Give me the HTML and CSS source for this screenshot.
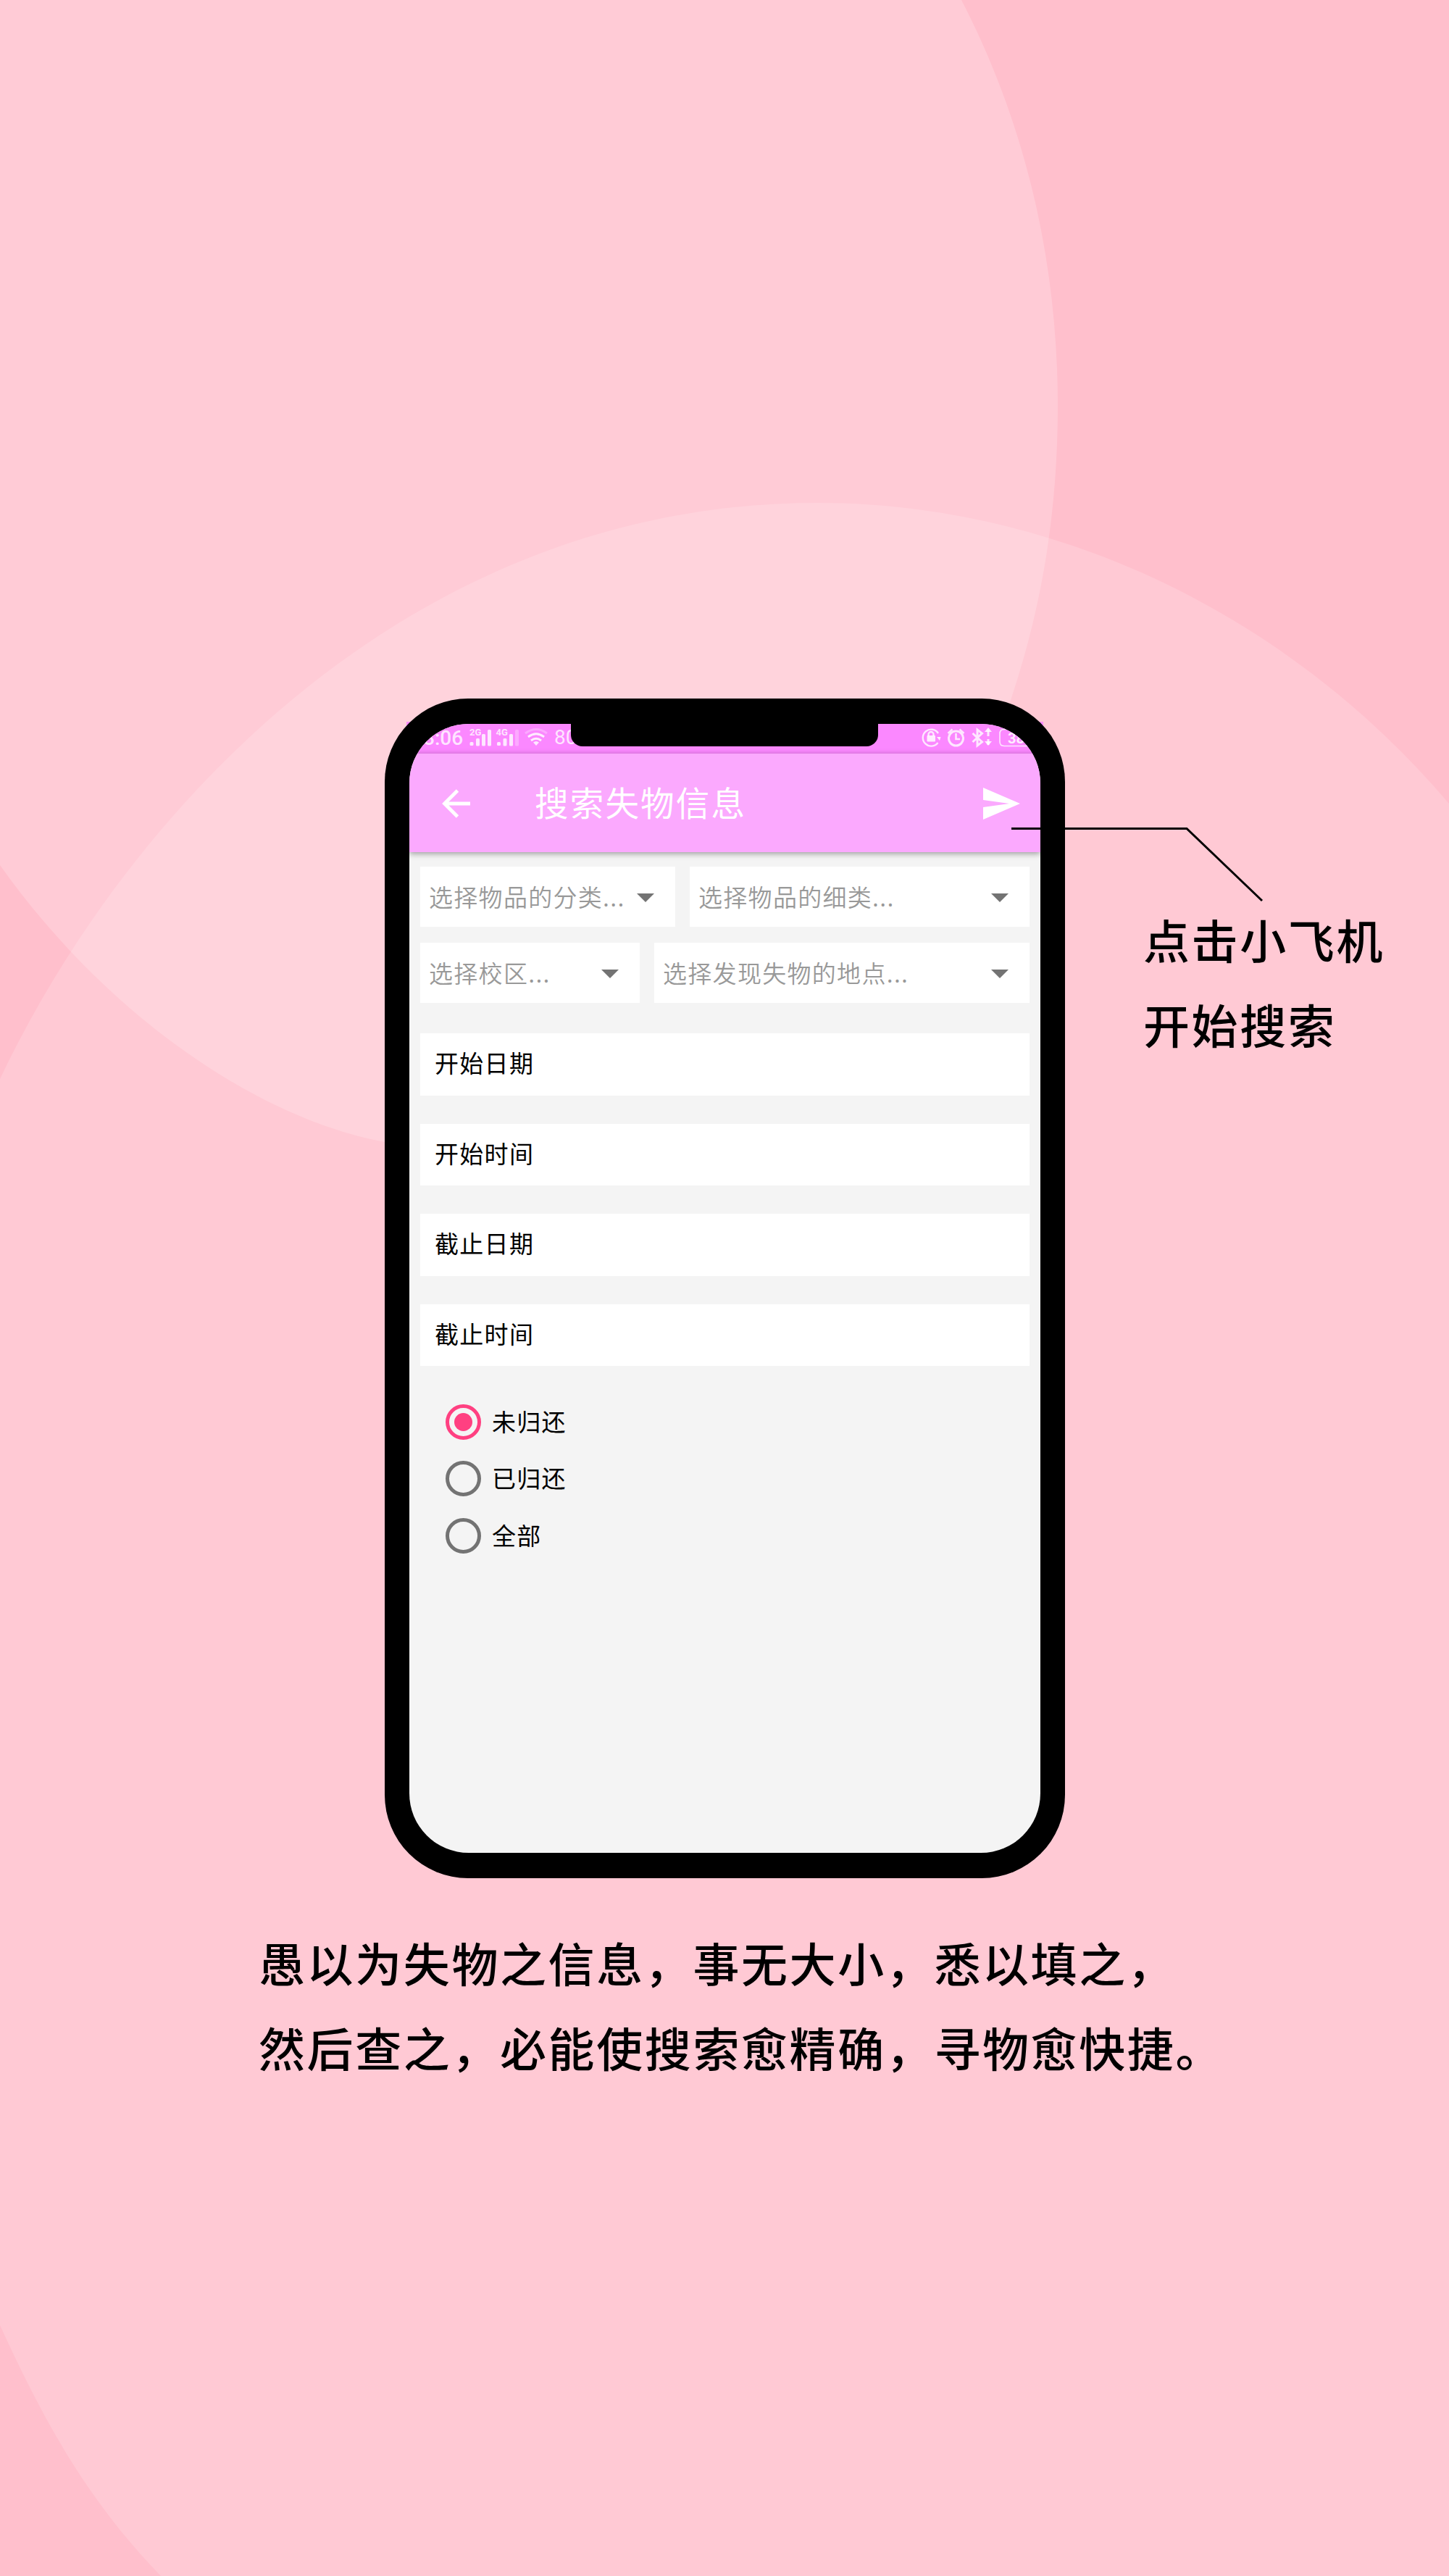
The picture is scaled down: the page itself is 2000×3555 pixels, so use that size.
FILE: index.html
```html
<!DOCTYPE html>
<html lang="zh-CN">
<head>
<meta charset="utf-8">
<title>搜索失物信息</title>
<link rel="stylesheet" href="styles.css">
</head>
<body>
<main class="poster">
  <svg class="backdrop" viewBox="0 0 2000 3555" aria-hidden="true">
    <path fill="#fff" fill-opacity=".2" d="M0 0H1327C1415 170 1460 360 1460 560C1460 700 1440 830 1397 960C1260 1400 870 1660 531 1576C360 1545 150 1405 0 1194Z"/>
    <path fill="#fff" fill-opacity=".16" d="M0 1489C165 1140 550 694 1129 694C1460 694 1780 850 2000 1109V3555H222C120 3450 60 3340 0 3209Z"/>
  </svg>

  <section class="stage">
    <div class="phone">
      <div class="screen">
        <div class="status">
          <span class="clock">8:06</span>
          <svg class="status-left" viewBox="646 999 112 41" width="112" height="41">
            <g fill="#fff" fill-opacity=".8">
              <text x="648" y="1015" class="net">2G</text>
              <text x="684.500" y="1015" class="net">4G</text>
              <rect x="648.500" y="1024" width="5" height="5" rx="1.500"/><rect x="657" y="1019" width="5" height="10.500" rx="1.500"/><rect x="665" y="1013" width="5" height="16.500" rx="1.500"/><rect x="673" y="1007" width="5" height="22.500" rx="1.500"/>
              <rect x="686" y="1024" width="5" height="5" rx="1.500"/><rect x="694.500" y="1019" width="5" height="10.500" rx="1.500"/><rect x="703" y="1013" width="5" height="16.500" rx="1.500"/><rect x="711" y="1007" width="5" height="22.500" rx="1.500" fill-opacity=".28"/>
              <path d="M740 1029l-4-4.500q4-3 8 0z"/>
            </g>
            <g fill="none" stroke="#fff" stroke-opacity=".85" stroke-width="3">
              <path d="M733 1022q7-5.500 14 0"/><path d="M729 1017q11-8.500 22 0"/><path d="M725 1012q15-11 30 0" stroke-opacity=".28"/>
            </g>
          </svg>
          <span class="speed">80</span>
          <svg class="status-right" viewBox="1270 999 166 41" width="166" height="41">
            <g fill="none" stroke="#fff" stroke-opacity=".8" stroke-width="2.400">
              <path d="M1295 1012a11.500 11.500 0 1 0-.5 13"/><path d="M1281.500 1016v-2.500a3.500 3.500 0 0 1 7 0v2.500"/>
              <circle cx="1319.500" cy="1019" r="10" stroke-width="3"/><path d="M1319.500 1012v8h5.500" stroke-width="2.600"/><path d="M1308.500 1012l6-5.500M1330.500 1012l-6-5.500"/>
              <path d="M1342.500 1012l13 12-6.500 5v-22l6.500 5-13 12" stroke-width="3"/><path d="M1364 1008v8M1364 1020v8" stroke-width="3"/>
              <path d="M1450 1006.500h-64q-6 0-6 6v11q0 6 6 6h64" stroke-width="1.600"/>
            </g>
            <g fill="#fff" fill-opacity=".85">
              <rect x="1279.500" y="1015" width="11.500" height="8.500" rx="1"/><path d="M1293 1017h5.500l-1.500 5z"/>
              <path d="M1364 1004l5 6h-10zM1364 1029l5-6h-10z"/>
              <text x="1391" y="1025.500" class="battery">38</text>
            </g>
          </svg>
        </div>

        <header class="appbar">
          <svg class="back" viewBox="0 0 40 40" width="40" height="40"><path d="M39 20H4M21.500 2L3.500 20l18 18" fill="none" stroke="#fff" stroke-width="4.800"/></svg>
          <h1 class="title">搜索失物信息</h1>
          <svg class="send" viewBox="0 0 51 44" width="51" height="44"><path d="M0 0L51 22 0 44V27L36 22 0 17Z" fill="#fff"/></svg>
        </header>

        <div class="form">
          <div class="selects first">
            <div class="select"><span>选择物品的分类...</span><i class="caret"></i></div>
            <div class="select"><span>选择物品的细类...</span><i class="caret"></i></div>
          </div>
          <div class="selects second">
            <div class="select"><span>选择校区...</span><i class="caret"></i></div>
            <div class="select"><span>选择发现失物的地点...</span><i class="caret"></i></div>
          </div>
          <div class="fields">
            <div class="field">开始日期</div>
            <div class="field">开始时间</div>
            <div class="field">截止日期</div>
            <div class="field">截止时间</div>
          </div>
          <div class="radios">
            <div class="radio on"><i class="ring"></i><span>未归还</span></div>
            <div class="radio"><i class="ring"></i><span>已归还</span></div>
            <div class="radio"><i class="ring"></i><span>全部</span></div>
          </div>
        </div>
      </div>
      <div class="notch"></div>
    </div>
    <p class="note">点击小飞机<br>开始搜索</p>
  </section>

  <p class="caption">愚以为失物之信息，事无大小，悉以填之，<br>然后查之，必能使搜索愈精确，寻物愈快捷。</p>

  <svg class="leader" viewBox="0 0 350 106" width="350" height="106" aria-hidden="true"><path d="M0 3.500H242L346 103" fill="none" stroke="#000" stroke-width="3"/></svg>
</main>
</body>
</html>
```
FILE: styles.css
```css
* { box-sizing: border-box; }

body {
  margin: 0;
  font-family: "Noto Sans CJK SC", sans-serif;
  color: #000;
}

h1, p { margin: 0; font-weight: 400; }
svg { display: block; }

.poster {
  position: relative;
  isolation: isolate;
  width: 2000px;
  height: 3555px;
  padding-top: 964px;
  overflow: hidden;
  background: #ffbfcc;
}

.backdrop {
  position: absolute;
  inset: 0;
  z-index: -2;
  width: 2000px;
  height: 3555px;
}

.stage { display: flex; padding-left: 531px; }

.phone {
  position: relative;
  width: 939px;
  height: 1628px;
  padding: 35px 34px 35px;
  border-radius: 115px;
  background: #000;
}

/* The screen's square corners show slightly past the rounded frame. */
.phone::before {
  content: "";
  position: absolute;
  z-index: -1;
  left: 30px;
  right: 30px;
  top: 32px;
  height: 80px;
  background: #f98dfc;
}

.screen {
  height: 100%;
  border-radius: 82px;
  overflow: hidden;
  background: #f4f4f4;
}

.notch {
  position: absolute;
  left: 257px;
  top: 30px;
  width: 424px;
  height: 36px;
  border-radius: 0 0 16px 16px;
  background: #000;
}

.status {
  display: flex;
  height: 41px;
  padding-left: 19px;
  background: #fb88ff;
  color: rgba(255, 255, 255, .8);
  font: 500 28px/40px Roboto, sans-serif;
}
.clock { width: 62px; }
.speed { width: 505px; margin-left: 7px; font-weight: 400; line-height: 38px; }
.net { font: 700 13px Roboto, sans-serif; }
.battery { font: 700 20px Roboto, sans-serif; }

.appbar {
  position: relative;
  display: flex;
  align-items: center;
  height: 136px;
  padding: 1px 28px 0 45px;
  background: #fba9fe;
  box-shadow: 0 2px 8px rgba(0, 0, 0, .38);
}
.title {
  flex: 1;
  margin: -6px 0 0 88px;
  font-size: 46.500px;
  line-height: 60px;
  letter-spacing: 2.200px;
  color: #fff;
}

.form {
  padding: 20px 15px 0;
  font-size: 33px;
  line-height: 48px;
  letter-spacing: 1.300px;
}

.selects { display: grid; gap: 20px; }
.first { grid-template-columns: 352px 1fr; margin-bottom: 22px; }
.second { grid-template-columns: 303px 1fr; margin-bottom: 42px; }
.select {
  display: flex;
  align-items: center;
  justify-content: space-between;
  height: 83px;
  padding: 0 29px 2px 12px;
  background: #fff;
  color: #999;
  white-space: nowrap;
  font-weight: 350;
}
.caret {
  margin-top: 4px;
  border: 12px solid transparent;
  border-top-color: #737373;
  border-bottom: 0;
}

.fields { display: grid; gap: 39px; }
.field {
  height: 85.500px;
  padding-left: 20px;
  line-height: 81px;
  background: #fff;
}

.radios { display: grid; gap: 29.300px; padding: 53px 0 0 35px; }
.radio { display: flex; align-items: center; height: 49px; gap: 15px; }
.radio span { padding-bottom: 3px; }
.ring {
  display: grid;
  place-items: center;
  width: 49px;
  height: 49px;
  border: 5px solid #737373;
  border-radius: 50%;
}
.on .ring { border-color: #ff4081; }
.on .ring::after {
  content: "";
  width: 25px;
  height: 25px;
  border-radius: 50%;
  background: #ff4081;
}

.note, .caption {
  font-size: 64px;
  font-weight: 500;
  line-height: 117px;
  letter-spacing: 2.600px;
}
.note { padding: 273px 0 0 108px; white-space: nowrap; }
.caption { margin: 57px 0 0 357px; }

.leader { position: absolute; left: 1396px; top: 1140px; }
```
